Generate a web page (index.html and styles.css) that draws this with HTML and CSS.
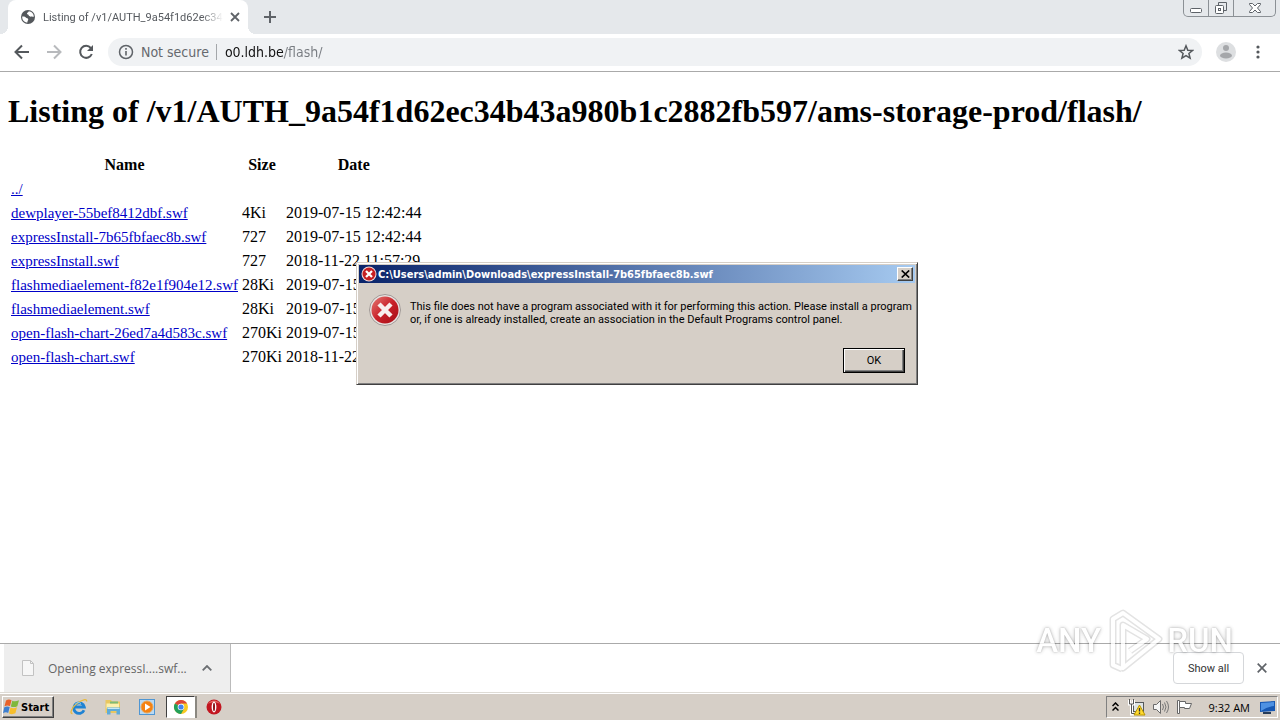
FILE: index.html
```
<!DOCTYPE html>
<html lang="en">
<head>
    <meta charset="UTF-8">
    <meta name="viewport" content="width=device-width, initial-scale=1.0">
    <title>Listing of /v1/AUTH_9a54f1d62ec34b43a980b1c2882fb597/ams-storage-prod/flash/</title>
    <link rel="stylesheet" href="styles.css">
</head>
<body>
    <header class="tabstrip">
        <div class="tab">
            <svg class="globe" width="16" height="16" viewBox="0 0 16 16"><circle cx="8" cy="8" r="7" fill="#54585c"/><path d="M2.200 7.500c1.800-.3 2.800 0 3.600 1 .8.900 2.200.5 2.400 1.700.2 1-.8 1.300-.8 3.300C4.300 13.500 2 11 2.200 7.500zM8.800 2.200c-.2 1.300-2 1.300-1.800 2.600.2 1 1.600.6 1.800 1.700.2 1.200 1.200 1.300 2.600 1 1-.2 1.500.2 2.400.3C14 5 11.500 2.300 8.800 2.200z" fill="#fff"/></svg>
            <span class="tab-title">Listing of /v1/AUTH_9a54f1d62ec34</span>
            <button class="icon-btn" aria-label="Close tab"><svg width="10" height="10" viewBox="0 0 10 10"><path d="M1 1l8 8M9 1l-8 8" stroke="#5f6368" stroke-width="1.800"/></svg></button>
        </div>
        <button class="icon-btn new-tab" aria-label="New tab"><svg width="12" height="12" viewBox="0 0 12 12"><path d="M6 0v12M0 6h12" stroke="#5f6368" stroke-width="2"/></svg></button>
        <div class="window-controls">
            <button aria-label="Minimize"><svg width="14" height="14" viewBox="0 0 14 14"><rect x="1.500" y="7.500" width="11" height="4" rx="1" fill="#fff" stroke="#5d6268"/></svg></button>
            <button aria-label="Restore"><svg width="14" height="14" viewBox="0 0 14 14" fill="none" stroke="#5d6268"><path d="M4.500 4V1.500h8v8H10"/><rect x="1.500" y="4.500" width="8" height="8" rx="1" fill="#fff"/><rect x="4.500" y="7.500" width="2" height="2"/></svg></button>
            <button class="wide" aria-label="Close"><svg width="14" height="12" viewBox="0 0 14 12"><path d="M1.500 1.500h3L7 4l2.500-2.500h3v1L9.500 6l3 3.500v1h-3L7 8l-2.500 2.500h-3v-1L4.500 6l-3-3.500z" fill="#fff" stroke="#5d6268"/></svg></button>
        </div>
    </header>

    <nav class="toolbar">
        <button class="icon-btn nav-btn" aria-label="Back"><svg width="16" height="16" viewBox="0 0 16 16" fill="none" stroke="#54585c" stroke-width="2"><path d="M15 8H2M8 1.500L1.500 8 8 14.500"/></svg></button>
        <button class="icon-btn nav-btn" aria-label="Forward"><svg width="16" height="16" viewBox="0 0 16 16" fill="none" stroke="#b8babd" stroke-width="2"><path d="M1 8h13M8 1.500L14.500 8 8 14.500"/></svg></button>
        <button class="icon-btn nav-btn" aria-label="Reload"><svg width="16" height="16" viewBox="0 0 16 16"><path d="M12.800 4A6 6 0 1 0 13.800 10" fill="none" stroke="#54585c" stroke-width="2"/><path d="M15 1v6H9z" fill="#54585c"/></svg></button>
        <div class="omnibox">
            <svg width="16" height="16" viewBox="0 0 16 16"><circle cx="8" cy="8" r="6.500" fill="none" stroke="#5f6368" stroke-width="1.500"/><path d="M8 7v4.500M8 4v1.700" stroke="#5f6368" stroke-width="1.600"/></svg>
            <label class="security" for="address">Not secure</label>
            <input class="address" id="address" type="text" value="o0.ldh.be/flash/">
            <button class="icon-btn" aria-label="Bookmark this page"><svg width="16" height="16" viewBox="0 0 16 16"><path d="M8 1.800l1.800 4.400 4.700.3-3.600 3 1.200 4.600L8 11.600l-4.100 2.500 1.200-4.600-3.600-3 4.700-.3z" fill="none" stroke="#54585c" stroke-width="1.500"/></svg></button>
        </div>
        <button class="icon-btn avatar" aria-label="Profile"><svg width="20" height="20" viewBox="0 0 20 20"><circle cx="10" cy="10" r="10" fill="#dddfe1"/><circle cx="10" cy="6" r="3" fill="#a5a7aa"/><ellipse cx="10" cy="13.500" rx="6" ry="3" fill="#a5a7aa"/></svg></button>
        <button class="icon-btn more" aria-label="Menu"><svg width="4" height="14" viewBox="0 0 4 14" fill="#54585c"><circle cx="2" cy="2" r="1.600"/><circle cx="2" cy="7" r="1.600"/><circle cx="2" cy="12" r="1.600"/></svg></button>
    </nav>

    <main class="page">
        <h1>Listing of /v1/AUTH_9a54f1d62ec34b43a980b1c2882fb597/ams-storage-prod/flash/</h1>
        <table class="listing">
            <tr><th>Name</th><th>Size</th><th>Date</th></tr>
            <tr><td><a href="../">../</a></td><td></td><td></td></tr>
            <tr><td><a href="#">dewplayer-55bef8412dbf.swf</a></td><td>4Ki</td><td>2019-07-15 12:42:44</td></tr>
            <tr><td><a href="#">expressInstall-7b65fbfaec8b.swf</a></td><td>727</td><td>2019-07-15 12:42:44</td></tr>
            <tr><td><a href="#">expressInstall.swf</a></td><td>727</td><td>2018-11-22 11:57:29</td></tr>
            <tr><td><a href="#">flashmediaelement-f82e1f904e12.swf</a></td><td>28Ki</td><td>2019-07-15</td></tr>
            <tr><td><a href="#">flashmediaelement.swf</a></td><td>28Ki</td><td>2019-07-15</td></tr>
            <tr><td><a href="#">open-flash-chart-26ed7a4d583c.swf</a></td><td>270Ki</td><td>2019-07-15</td></tr>
            <tr><td><a href="#">open-flash-chart.swf</a></td><td>270Ki</td><td>2018-11-22</td></tr>
        </table>
    </main>

    <section class="shelf">
        <button class="download">
            <svg width="14" height="16" viewBox="0 0 14 16"><path d="M1.500.5h8l3 3v12h-11z" fill="#f6f6f6" stroke="#c2c2c2"/><path d="M9.500.5v3h3" fill="none" stroke="#c2c2c2"/></svg>
            <span class="download-name">Opening expressI....swf...</span>
            <svg width="10" height="6" viewBox="0 0 10 6"><path d="M.7 5.300L5 1l4.300 4.300" fill="none" stroke="#6b6e72" stroke-width="1.800"/></svg>
        </button>
        <button class="show-all">Show all</button>
        <button class="icon-btn shelf-close" aria-label="Close downloads"><svg width="10" height="10" viewBox="0 0 10 10"><path d="M.7.7l8.600 8.600M9.300.7L.7 9.300" stroke="#5f6368" stroke-width="1.700"/></svg></button>
    </section>

    <footer class="taskbar">
        <button class="start">
            <svg width="17" height="16" viewBox="0 0 17 16"><path d="M3 1.500c2-1.300 3.800-1.200 5.500-.3L7 7C5.200 6.200 3.500 6.200 1.500 7.200z" fill="#e8622a"/><path d="M9.300 1.700c2 1 4 .8 6.700-.4L14.300 7.200c-2 1-4.500 1.200-6.500.2z" fill="#7fb83c"/><path d="M1.300 8.200c2-1 3.500-1 5.400-.2l-1.500 6c-1.600-1-3.400-.8-5.200.2z" fill="#3d7fd0"/><path d="M7.500 8.500c2 1 4 .8 6.500-.2l-1.600 6c-2 1-4.400 1.200-6.400.1z" fill="#f6be2c"/></svg>
            <span>Start</span>
        </button>
        <div class="quick-launch">
            <button aria-label="Internet Explorer"><svg width="18" height="18" viewBox="0 0 18 18"><path d="M14 12.200A5.300 5.300 0 1 1 14.300 9H5" fill="none" stroke="#1f83d3" stroke-width="2.800"/><path d="M2.500 15.500C-1 16 2 9 7.500 5 12 1.700 17 .2 16.700 3.500" fill="none" stroke="#e9b93a" stroke-width="1.300"/><path d="M5 6.500c1.500-2 4-2.500 6-1" fill="none" stroke="#8cd0f7"/></svg></button>
            <button aria-label="Explorer"><svg width="18" height="18" viewBox="0 0 18 18"><path d="M1.500 2h5.500l1 1.500h8V15H1.500z" fill="#e9c761"/><path d="M2.500 5.500h12.500v5H2.500z" fill="#fbf0af"/><path d="M6 3.500h8v2H6z" fill="#7dbb75"/><path d="M3 9.500h13v7h-3.500v-3.500H6.500v3.500H3z" fill="#5fabd8"/><path d="M3.500 10.500H15.500" stroke="#c4e7f7"/></svg></button>
            <button aria-label="Media Player"><svg width="18" height="18" viewBox="0 0 18 18"><rect x="1.500" y="1.500" width="15" height="15" fill="#b9d9f3" stroke="#4f96d3"/><circle cx="9" cy="9" r="6" fill="#f58212" stroke="#e8a75b"/><path d="M7 5.500v7L12.500 9z" fill="#fff"/></svg></button>
            <button class="active" aria-label="Chrome"><svg width="16" height="16" viewBox="0 0 16 16"><circle cx="8" cy="8" r="7" fill="#f8c921"/><path d="M8 8L1.900 4.500A7 7 0 0 1 14.100 4.500H8z" fill="#dd4538"/><path d="M8 8L1.900 4.500A7 7 0 0 0 8 15l3-5.300z" fill="#23a05a"/><circle cx="8" cy="8" r="3.300" fill="#fff"/><circle cx="8" cy="8" r="2.600" fill="#4283ee"/></svg></button>
            <button aria-label="Opera"><svg width="18" height="18" viewBox="0 0 18 18"><circle cx="9" cy="9" r="7.500" fill="#c21620"/><path d="M3 6a7 7 0 0 1 12 0c-3-2.500-9-2.500-12 0z" fill="#e56a65"/><ellipse cx="9" cy="9" rx="2.400" ry="5.400" fill="#fff"/><ellipse cx="9" cy="9" rx="1" ry="4.200" fill="#8b1117"/></svg></button>
        </div>
        <div class="tray">
            <svg width="7" height="10" viewBox="0 0 7 10"><path d="M.5 4l3-3 3 3M.5 8.500l3-3 3 3" fill="none" stroke="#000" stroke-width="1.500"/></svg>
            <svg class="tray-network" width="18" height="18" viewBox="0 0 18 18"><rect x="5.500" y="4.500" width="10" height="9" fill="#dfe5e7" stroke="#55595c"/><path d="M1.500 2v4h4V2M3.500 6v10h5" fill="none" stroke="#fff" stroke-width="3"/><path d="M1.500 1v5h4V1M3.500 6v9.500h5" fill="none" stroke="#555"/><path d="M11.500 7l5.500 10H6z" fill="#ffd92e" stroke="#b79400"/><path d="M11.500 10v3.500M11.500 14.500V16" stroke="#333" stroke-width="1.300"/></svg>
            <svg class="tray-volume" width="18" height="16" viewBox="0 0 18 16"><path d="M1.500 5.500h3l4-4v13l-4-4h-3z" fill="#f5f5f5" stroke="#6a6a6a"/><path d="M10.500 5q2 3 0 6M12.500 3.500q3 4.500 0 9M14.500 2q4 6 0 12" fill="none" stroke="#777"/></svg>
            <svg class="tray-flag" width="17" height="16" viewBox="0 0 17 16"><path d="M1.500 1.500h2v13h-2z" fill="#fff" stroke="#666"/><path d="M3.500 2.500h6v2h6l-2 5h-5v-1h-5z" fill="#fff" stroke="#666"/></svg>
            <span class="clock">9:32 AM</span>
            <svg class="tray-desktop" width="15" height="13" viewBox="0 0 15 13"><path d="M0 1l15-1v10L0 11z" fill="#1657b2"/><path d="M1 2l13-1v4q-7 1-13 5z" fill="#4e91e2"/><path d="M3 12h8" stroke="#263b58" stroke-width="2"/></svg>
        </div>
    </footer>

    <div class="dialog" role="alertdialog" aria-labelledby="dialog-title" aria-describedby="dialog-text">
        <div class="titlebar">
            <svg width="16" height="16" viewBox="0 0 32 32"><circle cx="16" cy="16" r="15" fill="#f1dddb"/><circle cx="16" cy="16" r="13" fill="#c51f22"/><path d="M10 10l12 12M22 10L10 22" stroke="#fff" stroke-width="4.500"/></svg>
            <span id="dialog-title">C:\Users\admin\Downloads\expressInstall-7b65fbfaec8b.swf</span>
            <button class="dialog-close" aria-label="Close"><svg width="9" height="8" viewBox="0 0 9 8"><path d="M.7.500l7.500 7M8.200.5l-7.500 7" stroke="#000" stroke-width="1.700"/></svg></button>
        </div>
        <div class="dialog-body">
            <svg width="34" height="34" viewBox="0 0 34 34"><defs><linearGradient id="red" x1="0" y1="0" x2="1" y2="1"><stop offset="0" stop-color="#e57b75"/><stop offset=".5" stop-color="#c9222a"/><stop offset="1" stop-color="#a50c14"/></linearGradient></defs><circle cx="17" cy="17" r="15.500" fill="#e7e3e1" stroke="#a19996"/><circle cx="17" cy="17" r="13.500" fill="url(#red)"/><path d="M11 11l12 12M23 11L11 23" stroke="#f8efed" stroke-width="4.500"/></svg>
            <p id="dialog-text">This file does not have a program associated with it for performing this action. Please install a program<br>or, if one is already installed, create an association in the Default Programs control panel.</p>
        </div>
        <button class="ok">OK</button>
    </div>

    <div class="watermark">
        <span>ANY</span>
        <svg width="58" height="64" viewBox="0 0 58 64" fill="none" stroke-linejoin="round"><g stroke="#000" stroke-opacity=".14" stroke-width="7"><path d="M17 60l-9-4V10l10-6 36 26-36 29V16l24 14-17 12"/></g><g stroke="#fff" stroke-width="4"><path d="M17 60l-9-4V10l10-6 36 26-36 29V16l24 14-17 12"/></g></svg>
        <span>RUN</span>
    </div>
</body>
</html>
```
FILE: styles.css
```
* {
    box-sizing: border-box;
}
body {
    display: flex;
    flex-direction: column;
    min-height: 100vh;
    margin: 0;
    background: #fff;
    color: #000;
    font-family: "Open Sans", "Noto Sans", sans-serif;
    font-size: 11px;
}
button {
    font: inherit;
    color: inherit;
    padding: 0;
    cursor: pointer;
}
svg {
    display: block;
    flex: none;
}
.icon-btn {
    display: flex;
    align-items: center;
    justify-content: center;
    flex: none;
    border: none;
    background: none;
}

/* browser chrome */
.tabstrip {
    display: flex;
    align-items: flex-end;
    height: 34px;
    padding-left: 8px;
    background: #e5e8eb;
}
.tab {
    position: relative;
    display: flex;
    align-items: center;
    gap: 7px;
    width: 240px;
    height: 34px;
    padding: 0 11px 0 12px;
    background: #fff;
    border-radius: 8px 8px 0 0;
}
.tab::before, .tab::after {
    content: "";
    position: absolute;
    bottom: 0;
    width: 8px;
    height: 8px;
}
.tab::before {
    left: -8px;
    background: radial-gradient(circle at 0 0, transparent 8px, #fff 8px);
}
.tab::after {
    right: -8px;
    background: radial-gradient(circle at 100% 0, transparent 8px, #fff 8px);
}
.tab-title {
    flex: 1;
    white-space: nowrap;
    color: #55595e;
    font-family: Roboto, sans-serif;
    -webkit-mask-image: linear-gradient(to right, #000 88%, transparent);
}
.new-tab {
    width: 28px;
    height: 34px;
    margin-left: 8px;
}
.window-controls {
    display: flex;
    align-self: flex-start;
    height: 17px;
    margin-left: auto;
    margin-right: 4px;
    border: 1px solid #8b9095;
    border-top: none;
    border-radius: 0 0 5px 5px;
}
.window-controls button {
    display: flex;
    align-items: center;
    justify-content: center;
    width: 25px;
    border: none;
    border-right: 1px solid #8b9095;
    background: none;
}
.window-controls .wide {
    width: 41px;
    border-right: none;
}
.toolbar {
    display: flex;
    align-items: center;
    height: 38px;
    padding: 0 8px 2px 6px;
    border-bottom: 1px solid #aaa;
}
.nav-btn {
    width: 32px;
    height: 32px;
}
.omnibox {
    display: flex;
    flex: 1;
    align-items: center;
    height: 28px;
    margin-left: 6px;
    padding: 0 8px 0 10px;
    border-radius: 14px;
    background: #f0f2f4;
    font-family: "DejaVu Sans Condensed", "DejaVu Sans", sans-serif;
    font-size: 14px;
}
.security {
    margin-left: 7px;
    padding-right: 7px;
    border-right: 1px solid #a4a7aa;
    color: #66696e;
    line-height: 16px;
}
.address {
    flex: 1;
    min-width: 0;
    height: 24px;
    padding: 0 8px;
    border: none;
    outline: none;
    font: inherit;
    /* host is black, path is grey */
    color: transparent;
    background: linear-gradient(to right, #111 67px, #777b80 67px);
    -webkit-background-clip: text;
    background-clip: text;
}
.avatar {
    width: 20px;
    margin-left: 14px;
}
.more {
    width: 28px;
    margin-left: 8px;
}

/* listing */
.page {
    flex: 1;
    padding: 21px 8px 0;
    font-family: "Liberation Serif", serif;
    font-size: 16px;
}
h1 {
    margin: 0 0 22px;
    font-size: 32px;
    line-height: 37px;
    white-space: nowrap;
}
.listing {
    border-spacing: 2px;
    line-height: 20px;
}
.listing th, .listing td {
    padding: 1px;
    height: 22px;
}
.listing a {
    display: block;
    color: #0000c8;
    font-size: 15px;
}

/* download shelf */
.shelf {
    display: flex;
    align-items: center;
    height: 49px;
    padding: 0 8px 0 4px;
    border-top: 1px solid #aaa;
}
.download {
    display: flex;
    align-items: center;
    align-self: stretch;
    width: 227px;
    padding: 0 18px 0 17px;
    border: none;
    border-right: 1px solid #bbb;
    background: #eee;
    color: #666;
    font-size: 12px;
}
.download-name {
    flex: 1;
    margin-left: 13px;
    text-align: left;
    white-space: nowrap;
}
.show-all {
    width: 71px;
    height: 32px;
    margin-left: auto;
    border: 1px solid #d5d7da;
    border-radius: 4px;
    background: #fff;
    color: #333;
    font-family: Roboto, sans-serif;
}
.shelf-close {
    width: 20px;
    height: 20px;
    margin-left: 8px;
}

/* taskbar */
.taskbar {
    display: flex;
    align-items: center;
    height: 28px;
    padding: 1px 2px 0;
    background: #d6cfc7;
    border-top: 1px solid #dedbd5;
    box-shadow: inset 0 1px #fff;
}
.start {
    display: flex;
    align-items: center;
    gap: 1px;
    width: 52px;
    height: 22px;
    border: 1px solid;
    border-color: #fff #404040 #404040 #fff;
    background: #d6cfc7;
    box-shadow: inset -1px -1px #808080;
    font-family: "DejaVu Sans Condensed", "DejaVu Sans", sans-serif;
    font-weight: bold;
}
.quick-launch {
    display: flex;
    align-items: center;
    gap: 4px;
    margin-left: 10px;
}
.quick-launch button {
    display: flex;
    align-items: center;
    justify-content: center;
    width: 30px;
    height: 22px;
    border: none;
    background: none;
}
.quick-launch .active {
    width: 29px;
    border: 1px solid;
    border-color: #404040 #fff #fff #404040;
    background: #fff;
    box-shadow: 2px 0 #8a8780;
}
.tray {
    display: flex;
    align-items: center;
    height: 22px;
    margin-left: auto;
    padding: 0 2px 0 5px;
    border: 1px solid;
    border-color: #808080 #fff #fff #808080;
}
.tray-network {
    margin-left: 9px;
}
.tray-volume {
    margin-left: 6px;
}
.tray-flag {
    margin-left: 6px;
}
.clock {
    margin-left: 16px;
}
.tray-desktop {
    margin-left: 10px;
}

/* message box */
.dialog {
    position: absolute;
    top: 262px;
    left: 356px;
    width: 562px;
    height: 123px;
    padding: 2px;
    border: 1px solid;
    border-color: #d6cfc7 #404040 #404040 #d6cfc7;
    background: #d6cfc7;
    box-shadow: inset 1px 1px #fff, inset -1px -1px #808080;
    font-family: Roboto, sans-serif;
}
.titlebar {
    display: flex;
    align-items: center;
    gap: 1px;
    height: 18px;
    padding: 0 2px;
    background: linear-gradient(to right, #0a246a, #a6caf0);
    color: #fff;
    font-family: "DejaVu Sans Condensed", "DejaVu Sans", sans-serif;
    font-weight: bold;
}
.dialog-close {
    display: flex;
    align-items: center;
    justify-content: center;
    width: 16px;
    height: 14px;
    margin-left: auto;
    border: 1px solid;
    border-color: #fff #404040 #404040 #fff;
    background: #d6cfc7;
    box-shadow: inset -1px -1px #808080;
}
.dialog-body {
    display: flex;
    gap: 8px;
    padding: 10px 9px 0;
}
.dialog-body p {
    margin: 7px 0 0;
    line-height: 13px;
    white-space: nowrap;
}
.ok {
    display: block;
    width: 62px;
    height: 25px;
    margin: 21px 10px 0 auto;
    border: 1px solid #000;
    background: #d6cfc7;
    box-shadow: inset 1px 1px #fff, inset -1px -1px #404040, inset -2px -2px #808080;
}

.watermark {
    position: absolute;
    right: 47px;
    bottom: 47px;
    display: flex;
    align-items: center;
    gap: 4px;
    color: #fff;
    font-family: Roboto, sans-serif;
    font-size: 33px;
    font-weight: 500;
    line-height: 64px;
    text-shadow: 0 0 2px rgba(0, 0, 0, 0.3), 0 0 4px rgba(0, 0, 0, 0.3);
    opacity: 0.8;
    pointer-events: none;
}
```
